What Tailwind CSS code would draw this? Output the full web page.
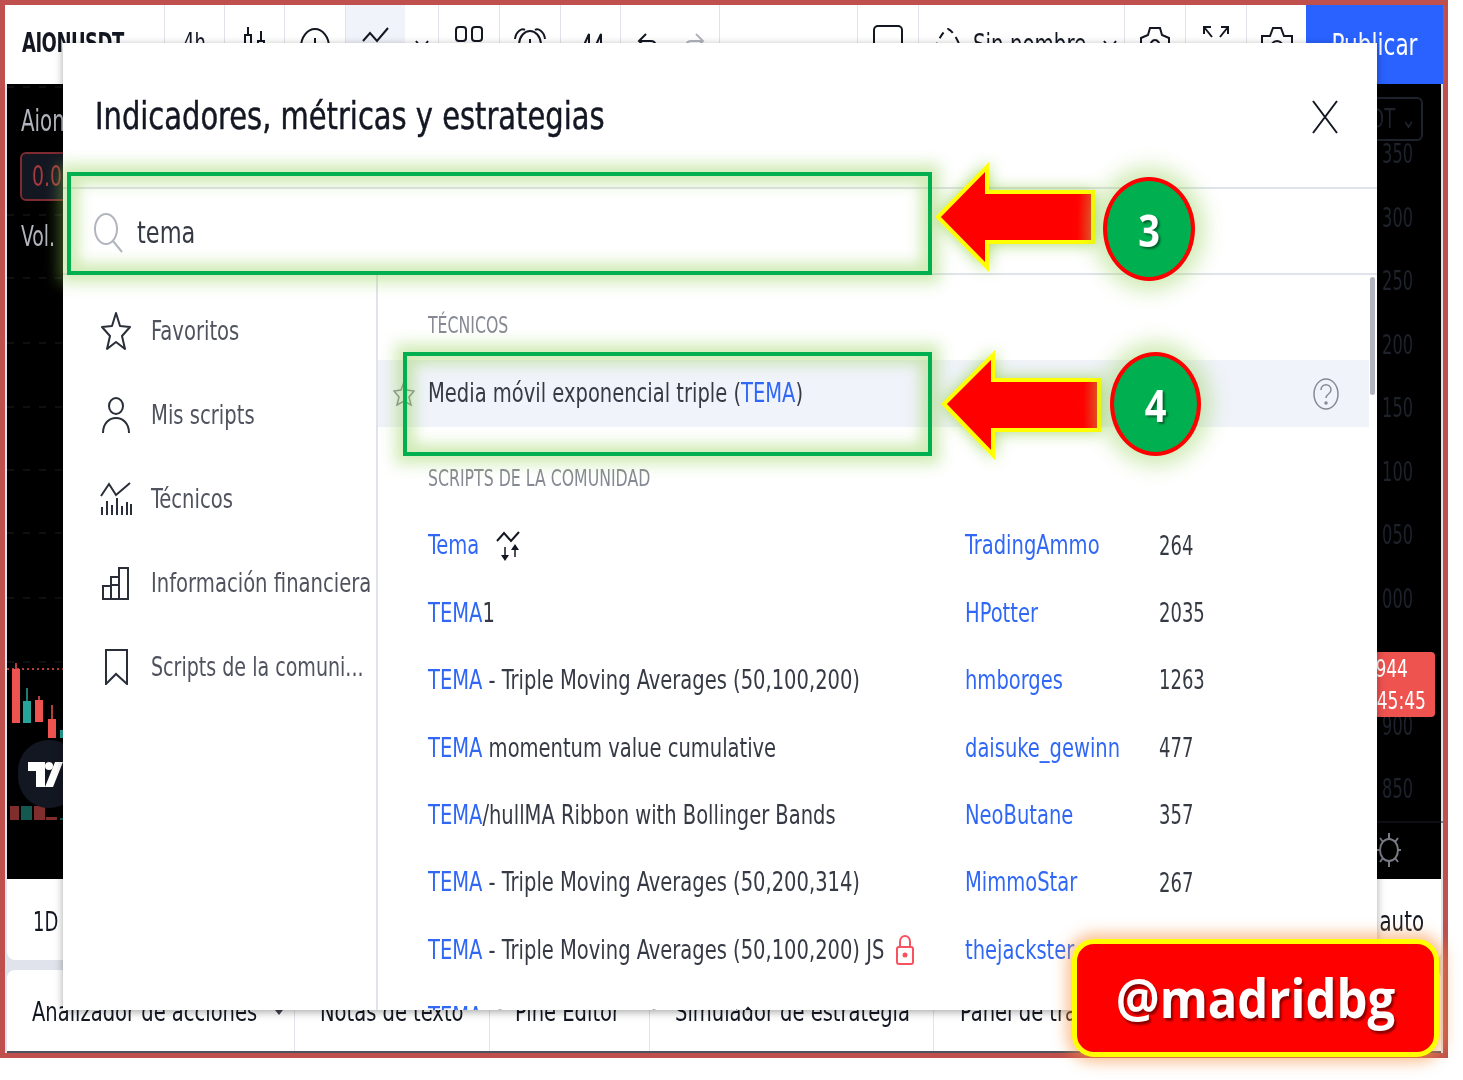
<!DOCTYPE html>
<html lang="en">
<head>
  <meta charset="UTF-8">
  <title>Indicadores, métricas y estrategias</title>
  <script src="https://cdn.jsdelivr.net/npm/@tailwindcss/browser@4"></script>
</head>
<body class="relative w-[1463px] h-[1080px] bg-white overflow-hidden font-['DejaVu_Sans_Condensed','DejaVu_Sans',sans-serif] text-[#363a45]">

  <!-- app behind the dialog -->
  <div class="w-[1448px] h-[1058px] border-[5px] border-[#c0504d] flex flex-col bg-[#e0e3eb]">
    <!-- top toolbar -->
    <div class="h-[79px] bg-white flex shrink-0 text-[#131722]">
      <div class="w-[159px] flex items-center pl-[17px] pb-[4px]"><span class="text-[20px] font-bold scale-y-135 tracking-[-0.5px]">AIONUSDT</span></div>
      <div class="w-[60px] border-l border-[#e0e3eb] flex items-center justify-center pb-[4px]"><span class="text-[20px] scale-y-135">4h</span></div>
      <div class="w-[60px] border-l border-[#e0e3eb] flex items-center justify-center">
        <svg width="24" height="36" fill="none" stroke="#131722" stroke-width="2"><path d="M5 0v8M2 8h6v20H2zM5 28v8M18 4v10M15 14h6v14h-6zM18 28v8"/></svg>
      </div>
      <div class="w-[61px] border-l border-[#e0e3eb] flex items-center justify-center">
        <svg width="32" height="40" fill="none" stroke="#131722" stroke-width="2"><ellipse cx="16" cy="22" rx="14" ry="18"/><path d="M16 13v18M7 24h18"/></svg>
      </div>
      <div class="w-[60px] border-l border-[#e0e3eb] bg-[#f0f3fa] flex items-center justify-center">
        <svg width="28" height="36" fill="none" stroke="#131722" stroke-width="2"><path d="M1 14l7-8 7 8L26 1"/><path d="M19 20h6v10h-6z"/></svg>
      </div>
      <div class="w-[33px] flex items-center justify-center">
        <svg width="14" height="10" fill="none" stroke="#131722" stroke-width="2"><path d="M1 1l6 8 6-8"/></svg>
      </div>
      <div class="w-[61px] border-l border-[#e0e3eb] flex items-start justify-center pt-[21px]">
        <svg width="28" height="16" fill="none" stroke="#131722" stroke-width="2"><rect x="1" y="1" width="10" height="14" rx="3"/><rect x="17" y="1" width="10" height="14" rx="3"/></svg>
      </div>
      <div class="w-[61px] border-l border-[#e0e3eb] flex items-center justify-center">
        <svg width="32" height="36" fill="none" stroke="#131722" stroke-width="2"><path d="M7 26a11 14 0 1 1 18 0M1 12C2 4 8 1 11 3M31 12C30 4 24 1 21 3M16 12v12h-6"/></svg>
      </div>
      <div class="w-[60px] border-l border-[#e0e3eb] flex items-center justify-center">
        <svg width="26" height="26" fill="none" stroke="#131722" stroke-width="2"><path d="M1 24L11 2v22M13 24L23 2v22"/></svg>
      </div>
      <div class="w-[99px] border-l border-[#e0e3eb] flex items-center pl-[16px] gap-[24px]">
        <svg width="22" height="26" fill="none" stroke="#131722" stroke-width="2"><path d="M9 2L2 9l7 7M2 9h12c5 0 6 5 6 14"/></svg>
        <svg width="22" height="26" fill="none" stroke="#b2b5be" stroke-width="2"><path d="M13 2l7 7-7 7M20 9H8c-5 0-6 5-6 14"/></svg>
      </div>
      <div class="w-[138px] border-l border-[#e0e3eb]"></div>
      <div class="w-[61px] border-l border-[#e0e3eb] flex items-start justify-center pt-[20px]">
        <svg width="30" height="36" fill="none" stroke="#131722" stroke-width="2"><rect x="1" y="1" width="28" height="34" rx="4"/></svg>
      </div>
      <div class="w-[206px] border-l border-[#e0e3eb] flex items-center pl-[11px]">
        <svg width="36" height="36" fill="none" stroke="#131722" stroke-width="2" stroke-dasharray="7 5" class="shrink-0"><path d="M2 34C4 20 12 4 18 2c6 2 14 18 16 32"/></svg>
        <span class="text-[22px] scale-y-125 ml-[7px] whitespace-nowrap">Sin nombre</span>
        <svg width="14" height="10" fill="none" stroke="#131722" stroke-width="2" class="ml-[17px]"><path d="M1 1l6 8 6-8"/></svg>
      </div>
      <div class="w-[61px] border-l border-[#e0e3eb] flex items-center justify-center">
        <svg width="34" height="40" fill="none" stroke="#131722" stroke-width="2"><path d="M12 3h10l2 7 7 3v12l-6 4-3 9H12l-3-9-6-4V13l7-3z"/><ellipse cx="17" cy="22" rx="5" ry="7"/></svg>
      </div>
      <div class="w-[61px] border-l border-[#e0e3eb] flex items-start justify-center pt-[20px]">
        <svg width="28" height="20" fill="none" stroke="#131722" stroke-width="2"><path d="M2 2l8 10M2 9V2h7M26 2l-8 10M26 9V2h-7"/></svg>
      </div>
      <div class="w-[60px] border-l border-[#e0e3eb] flex items-center justify-center">
        <svg width="34" height="38" fill="none" stroke="#131722" stroke-width="2"><path d="M2 36V10h8l3-8h8l3 8h8v26"/><ellipse cx="17" cy="24" rx="7" ry="9"/></svg>
      </div>
      <div class="flex-1 bg-[#2962ff] flex items-center justify-center text-white"><span class="text-[24px] scale-y-125">Publicar</span></div>
    </div>

    <!-- chart -->
    <div class="relative h-[795px] mx-[2px] bg-black shrink-0 text-[#1e222d]">
      <svg class="absolute inset-0" width="1436" height="795" fill="none">
        <g stroke="#1c1f26" stroke-width="1" stroke-dasharray="7 9">
          <path d="M0 3h70M0 131h70M0 194h70M0 259h70M0 323h70M0 386h70M0 449h70M0 514h70M0 578h70"/>
        </g>
        <path d="M0 585h56" stroke="#ef5350" stroke-width="1.5" stroke-dasharray="2 3"/>
        <g fill="#ef5350"><rect x="5" y="585" width="8" height="54"/><rect x="28" y="616" width="8" height="22"/><rect x="41" y="635" width="8" height="19"/></g>
        <g fill="#26a69a"><rect x="16" y="617" width="8" height="22"/><rect x="53" y="646" width="4" height="8"/></g>
        <path d="M9 579v6M32 612v4M45 621v14" stroke-width="1.5" stroke="#ef5350"/>
        <path d="M20 604v13" stroke-width="1.5" stroke="#26a69a"/>
        <g fill="#7f2d2d"><rect x="3" y="722" width="9" height="14"/><rect x="27" y="722" width="11" height="14"/><rect x="39" y="733" width="11" height="3"/></g>
        <g fill="#14584f"><rect x="14" y="722" width="11" height="14"/><rect x="53" y="734" width="4" height="2"/></g>
        <path d="M1370 738h66" stroke="#1c1f26"/>
      </svg>
      <!-- watermark logo -->
      <div class="absolute left-[11px] top-[656px] w-[62px] h-[68px] rounded-full bg-[#131722] flex items-center justify-center">
        <svg width="36" height="26" fill="#fff" class="mr-[8px]"><path d="M1 1h17v25H9V10H1z"/><circle cx="22" cy="5" r="4"/><path d="M28 1h8L26 26h-8z"/></svg>
      </div>
      <!-- legend -->
      <div class="absolute left-[14px] top-[15px] text-[#b2b5be] text-[22px] scale-y-135 origin-top-left">Aion</div>
      <div class="absolute left-[13px] top-[68px] w-[60px] h-[49px] rounded-md border-2 border-[#7d2a30] bg-[#131722] text-[#a63a3f] flex items-center pl-[10px] pt-[3px]"><span class="text-[21px] scale-y-135">0.0</span></div>
      <div class="absolute left-[14px] top-[132px] text-[#b2b5be] text-[21px] scale-y-135 origin-top-left">Vol.</div>
      <!-- price scale -->
      <div class="absolute right-[18px] top-[13px] w-[70px] h-[44px] border-2 border-[#1e222d] rounded-md text-[20px] flex items-center justify-end pr-[5px]"><span class="scale-y-135 whitespace-nowrap">DT ⌄</span></div>
      <div class="absolute left-[1371px] top-[38px] w-[40px] flex flex-col text-[18px] leading-[63.5px] text-right pr-[5px]">
        <span class="scale-y-150">350</span><span class="scale-y-150">300</span><span class="scale-y-150">250</span><span class="scale-y-150">200</span><span class="scale-y-150">150</span><span class="scale-y-150">100</span><span class="scale-y-150">050</span><span class="scale-y-150">000</span><div class="h-[63.5px]"></div><span class="scale-y-150">900</span><span class="scale-y-150">850</span>
      </div>
      <div class="absolute left-[1366px] top-[568px] w-[62px] h-[65px] rounded-sm bg-[#ef5350] text-white flex flex-col text-[19px] leading-[32px]">
        <span class="scale-y-135 text-right pr-[27px]">944</span><span class="scale-y-135 text-right pr-[9px]">45:45</span>
      </div>
      <svg class="absolute left-[1369px] top-[748px]" width="26" height="36" fill="none" stroke="#787b86" stroke-width="2"><ellipse cx="13" cy="18" rx="9" ry="11"/><path d="M13 1v6M13 29v6M1 18h4M21 18h4M4 6l3 4M22 6l-3 4M4 30l3-4M22 30l-3-4"/></svg>
    </div>

    <!-- range bar -->
    <div class="h-[81px] bg-white rounded-b-lg flex items-center justify-between shrink-0 mx-[2px] px-[26px] pt-[4px] text-[#131722]">
      <span class="text-[20px] scale-y-135">1D</span>
      <span class="text-[22px] scale-y-125 mr-[-9px]">auto</span>
    </div>
    <div class="h-[10px] shrink-0"></div>
    <!-- bottom tabs -->
    <div class="flex-1 bg-white rounded-t-lg mx-[2px] flex text-[#131722] text-[21.7px] border-b-2 border-[#50535e] pt-[3px]">
      <div class="w-[287px] flex items-center pl-[25px]"><span class="scale-y-125 whitespace-nowrap">Analizador de acciones</span>
        <svg width="8" height="5" fill="#434651" class="ml-[18px]"><path d="M0 0h8L4 5z"/></svg>
      </div>
      <div class="w-[195px] border-l border-[#e0e3eb] flex items-center pl-[25px]"><span class="scale-y-125 whitespace-nowrap">Notas de texto</span></div>
      <div class="w-[160px] border-l border-[#e0e3eb] flex items-center pl-[25px]"><span class="scale-y-125 whitespace-nowrap">Pine Editor</span></div>
      <div class="w-[284px] border-l border-[#e0e3eb] flex items-center pl-[25px]"><span class="scale-y-125 whitespace-nowrap">Simulador de estrategia</span></div>
      <div class="flex-1 border-l border-[#e0e3eb] flex items-center pl-[26px]"><span class="scale-y-125 whitespace-nowrap">Panel de trading</span></div>
    </div>
  </div>

  <!-- indicators dialog -->
  <div class="absolute left-[63px] top-[43px] w-[1314px] h-[967px] bg-white shadow-[0_2px_8px_rgba(0,0,0,0.35)] flex flex-col overflow-hidden">
    <div class="h-[144px] shrink-0 flex items-center justify-between pl-[32px] pr-[39px] pt-[3px]">
      <h1 class="text-[32.2px] text-[#131722] scale-y-115 origin-left [-webkit-text-stroke:0.4px_#131722]">Indicadores, métricas y estrategias</h1>
      <svg width="26" height="34" fill="none" stroke="#131722" stroke-width="2"><path d="M1 1l24 32M25 1L1 33"/></svg>
    </div>
    <div class="h-[88px] shrink-0 border-y-2 border-[#e0e3eb] flex items-center pl-[31px] pt-[3px]">
      <svg width="30" height="40" fill="none" stroke="#b2b5be" stroke-width="2"><ellipse cx="12" cy="16" rx="11" ry="15"/><path d="M19 28l9 11"/></svg>
      <span class="text-[25px] scale-y-120 ml-[13px]">tema</span>
    </div>
    <div class="flex-1 flex min-h-0">
      <!-- sidebar -->
      <div class="w-[315px] shrink-0 border-r-2 border-[#e0e3eb] pt-[14px] text-[21.8px] text-[#50535e]">
        <div class="h-[84px] flex items-center">
          <div class="w-[88px] flex justify-center pl-[20px] pr-[2px]"><svg width="30" height="40" fill="none" stroke="#2a2e39" stroke-width="2" stroke-linejoin="round"><path d="M15 2l4 13 10 1-8 9 3 13-9-7-9 7 3-13-8-9 10-1z"/></svg></div>
          <span class="scale-y-125">Favoritos</span>
        </div>
        <div class="h-[84px] flex items-center">
          <div class="w-[88px] flex justify-center pl-[20px] pr-[2px]"><svg width="28" height="37" fill="none" stroke="#2a2e39" stroke-width="2"><ellipse cx="14" cy="9" rx="7" ry="8"/><path d="M1 36c0-20 26-20 26 0"/></svg></div>
          <span class="scale-y-125">Mis scripts</span>
        </div>
        <div class="h-[84px] flex items-center">
          <div class="w-[88px] flex justify-center pl-[20px] pr-[2px]"><svg width="32" height="34" fill="none" stroke="#2a2e39" stroke-width="2"><path d="M1 14L9 2l7 11L30 1"/><path d="M2 33v-8M7 33V19M12 33V23M17 33V16M22 33V24M27 33V20M31 33V22"/></svg></div>
          <span class="scale-y-125">Técnicos</span>
        </div>
        <div class="h-[84px] flex items-center">
          <div class="w-[88px] flex justify-center pl-[20px] pr-[2px]"><svg width="28" height="33" fill="none" stroke="#2a2e39" stroke-width="2"><path d="M1 32V19h8V10h8V1h9v31zM9 32V19M17 32V10M17 18h-8"/></svg></div>
          <span class="scale-y-125 whitespace-nowrap">Información financiera</span>
        </div>
        <div class="h-[84px] flex items-center">
          <div class="w-[88px] flex justify-center pl-[20px] pr-[2px]"><svg width="23" height="36" fill="none" stroke="#2a2e39" stroke-width="2"><path d="M1 1h21v34L11 25 1 35z"/></svg></div>
          <span class="scale-y-125 whitespace-nowrap text-[21.2px]">Scripts de la comuni...</span>
        </div>
      </div>
      <!-- results -->
      <div class="relative flex-1 min-w-0 text-[21.7px] pr-[8px]">
        <div class="absolute right-[2px] top-[2px] w-[5px] h-[118px] bg-[#b2b5be] rounded-sm"></div>
        <div class="h-[85px] flex items-center pl-[50px] text-[#868993] text-[17.5px] pt-[16px]"><span class="scale-y-135">TÉCNICOS</span></div>
        <div class="relative h-[67px] bg-[#f0f3fa] flex items-center justify-between pl-[50px] pr-[29px]">
          <svg class="absolute left-[15px] top-[21px]" width="22" height="26" fill="none" stroke="#868993" stroke-width="1.5"><path d="M11 1l3 8 7 1-5 6 2 8-7-4-7 4 2-8-5-6 7-1z"/></svg>
          <div class="scale-y-125">Media móvil exponencial triple (<span class="text-[#3068f5]">TEMA</span>)</div>
          <svg width="28" height="34" fill="none" stroke="#868993" stroke-width="1.5"><ellipse cx="14" cy="17" rx="12" ry="15"/><path d="M9 13c0-7 10-7 10 0 0 4-5 4-5 8"/><circle cx="14" cy="26" r="1" fill="#868993"/></svg>
        </div>
        <div class="h-[85px] pt-[38px] pl-[50px] text-[#868993] text-[17.5px]"><div class="scale-y-135">SCRIPTS DE LA COMUNIDAD</div></div>
        <div class="h-[67.4px] grid grid-cols-[537px_194px_1fr] items-center pl-[50px]">
          <div class="flex items-center gap-[16px]"><span class="scale-y-125 text-[#3068f5]">Tema</span>
            <svg width="26" height="30" fill="none" stroke="#131722" stroke-width="2"><path d="M2 10L9 2l7 8 8-9"/><path d="M10 16v10M20 16v10" stroke-width="1.5"/><path d="M6 24h8l-4 6zM16 19h8l-4-6z" fill="#131722" stroke="none"/></svg>
          </div>
          <span class="scale-y-125 justify-self-start text-[#3068f5]">TradingAmmo</span><span class="scale-y-135 justify-self-start text-[20px]">264</span>
        </div>
        <div class="h-[67.4px] grid grid-cols-[537px_194px_1fr] items-center pl-[50px]">
          <div class="scale-y-125"><span class="text-[#3068f5]">TEMA</span>1</div>
          <span class="scale-y-125 justify-self-start text-[#3068f5]">HPotter</span><span class="scale-y-135 justify-self-start text-[20px]">2035</span>
        </div>
        <div class="h-[67.4px] grid grid-cols-[537px_194px_1fr] items-center pl-[50px]">
          <div class="scale-y-125"><span class="text-[#3068f5]">TEMA</span> - Triple Moving Averages (50,100,200)</div>
          <span class="scale-y-125 justify-self-start text-[#3068f5]">hmborges</span><span class="scale-y-135 justify-self-start text-[20px]">1263</span>
        </div>
        <div class="h-[67.4px] grid grid-cols-[537px_194px_1fr] items-center pl-[50px]">
          <div class="scale-y-125"><span class="text-[#3068f5]">TEMA</span> momentum value cumulative</div>
          <span class="scale-y-125 justify-self-start text-[#3068f5]">daisuke_gewinn</span><span class="scale-y-135 justify-self-start text-[20px]">477</span>
        </div>
        <div class="h-[67.4px] grid grid-cols-[537px_194px_1fr] items-center pl-[50px]">
          <div class="scale-y-125"><span class="text-[#3068f5]">TEMA</span>/hullMA Ribbon with Bollinger Bands</div>
          <span class="scale-y-125 justify-self-start text-[#3068f5]">NeoButane</span><span class="scale-y-135 justify-self-start text-[20px]">357</span>
        </div>
        <div class="h-[67.4px] grid grid-cols-[537px_194px_1fr] items-center pl-[50px]">
          <div class="scale-y-125"><span class="text-[#3068f5]">TEMA</span> - Triple Moving Averages (50,200,314)</div>
          <span class="scale-y-125 justify-self-start text-[#3068f5]">MimmoStar</span><span class="scale-y-135 justify-self-start text-[20px]">267</span>
        </div>
        <div class="h-[67.4px] grid grid-cols-[537px_194px_1fr] items-center pl-[50px]">
          <div class="flex items-center gap-[12px]"><div class="scale-y-125 whitespace-nowrap"><span class="text-[#3068f5]">TEMA</span> - Triple Moving Averages (50,100,200) JS</div>
            <svg width="18" height="30" fill="none" stroke="#f7525f" stroke-width="2"><path d="M4 12V7c0-8 10-8 10 0v5"/><rect x="1" y="12" width="16" height="17" rx="2"/><circle cx="9" cy="20" r="1.5" fill="#f7525f"/></svg>
          </div>
          <span class="scale-y-125 justify-self-start text-[#3068f5]">thejackster</span><span class="scale-y-135 justify-self-start text-[20px]">251</span>
        </div>
        <div class="h-[67.4px] grid grid-cols-[537px_194px_1fr] items-center pl-[50px]">
          <div class="flex items-start"><div class="scale-y-125"><span class="text-[#3068f5]">TEMA</span></div>
            <svg width="12" height="30" fill="none" stroke="#434651" stroke-width="2" class="ml-[12px]"><path d="M2 14c0-6 8-6 8 0"/></svg>
            <svg width="12" height="30" fill="none" stroke="#434651" stroke-width="2" class="ml-[142px]"><path d="M2 14c0-6 8-6 8 0"/></svg>
            <svg width="22" height="30" fill="none" stroke="#131722" stroke-width="2" class="ml-[75px]"><path d="M1 9l6 5 6-7 7 7"/></svg>
          </div>
          <svg width="14" height="30" fill="none" stroke="#3068f5" stroke-width="2" class="ml-[2px]"><path d="M2 14c0-6 10-6 10 0"/></svg>
        </div>
      </div>
    </div>
  </div>

  <!-- annotations -->
  <div class="absolute left-[67px] top-[172px] w-[865px] h-[103px] border-4 border-[#00b050] shadow-[0_0_14px_8px_rgba(146,208,80,0.42),inset_0_0_14px_8px_rgba(146,208,80,0.42)]"></div>
  <div class="absolute left-[403px] top-[352px] w-[529px] h-[104px] border-4 border-[#00b050] shadow-[0_0_14px_8px_rgba(146,208,80,0.42),inset_0_0_14px_8px_rgba(146,208,80,0.42)]"></div>

  <svg class="absolute left-[928px] top-[155px] drop-shadow-[0_0_8px_rgba(146,208,80,0.8)]" width="175" height="125">
    <defs><linearGradient id="shaft"><stop offset="0.9" stop-color="#ff0000"/><stop offset="1" stop-color="#ee4020"/></linearGradient></defs>
    <path d="M10 62L59 12v25h106v50H59v25z" fill="url(#shaft)" stroke="#ffff00" stroke-width="4"/>
  </svg>
  <svg class="absolute left-[934px] top-[343px] drop-shadow-[0_0_8px_rgba(146,208,80,0.8)]" width="175" height="125">
    <defs><linearGradient id="shaft2"><stop offset="0.9" stop-color="#ff0000"/><stop offset="1" stop-color="#ee4020"/></linearGradient></defs>
    <path d="M10 61L59 12v25h106v50H59v25z" fill="url(#shaft2)" stroke="#ffff00" stroke-width="4"/>
  </svg>

  <div class="absolute left-[1103px] top-[177px] w-[92px] h-[104px] rounded-[50%] bg-[#00b050] border-4 border-[#ff0000] shadow-[0_0_20px_10px_rgba(146,208,80,0.42)] flex items-center justify-center text-white font-['Open_Sans',sans-serif] font-bold text-[38px] [text-shadow:2px_2px_2px_rgba(0,0,0,0.45)]"><span class="scale-y-120">3</span></div>
  <div class="absolute left-[1110px] top-[352px] w-[91px] h-[104px] rounded-[50%] bg-[#00b050] border-4 border-[#ff0000] shadow-[0_0_20px_10px_rgba(146,208,80,0.42)] flex items-center justify-center text-white font-['Open_Sans',sans-serif] font-bold text-[38px] [text-shadow:2px_2px_2px_rgba(0,0,0,0.45)]"><span class="scale-y-120">4</span></div>

  <div class="absolute left-[1072px] top-[939px] w-[367px] h-[118px] rounded-[22px] bg-[#ff0000] border-[5px] border-[#ffff00] shadow-[0_0_14px_6px_rgba(247,150,70,0.55)] flex items-center justify-center text-white font-['Open_Sans',sans-serif] font-bold text-[49px] [text-shadow:2px_3px_2px_rgba(0,0,0,0.45)]"><span class="scale-y-110">@madridbg</span></div>

</body>
</html>
